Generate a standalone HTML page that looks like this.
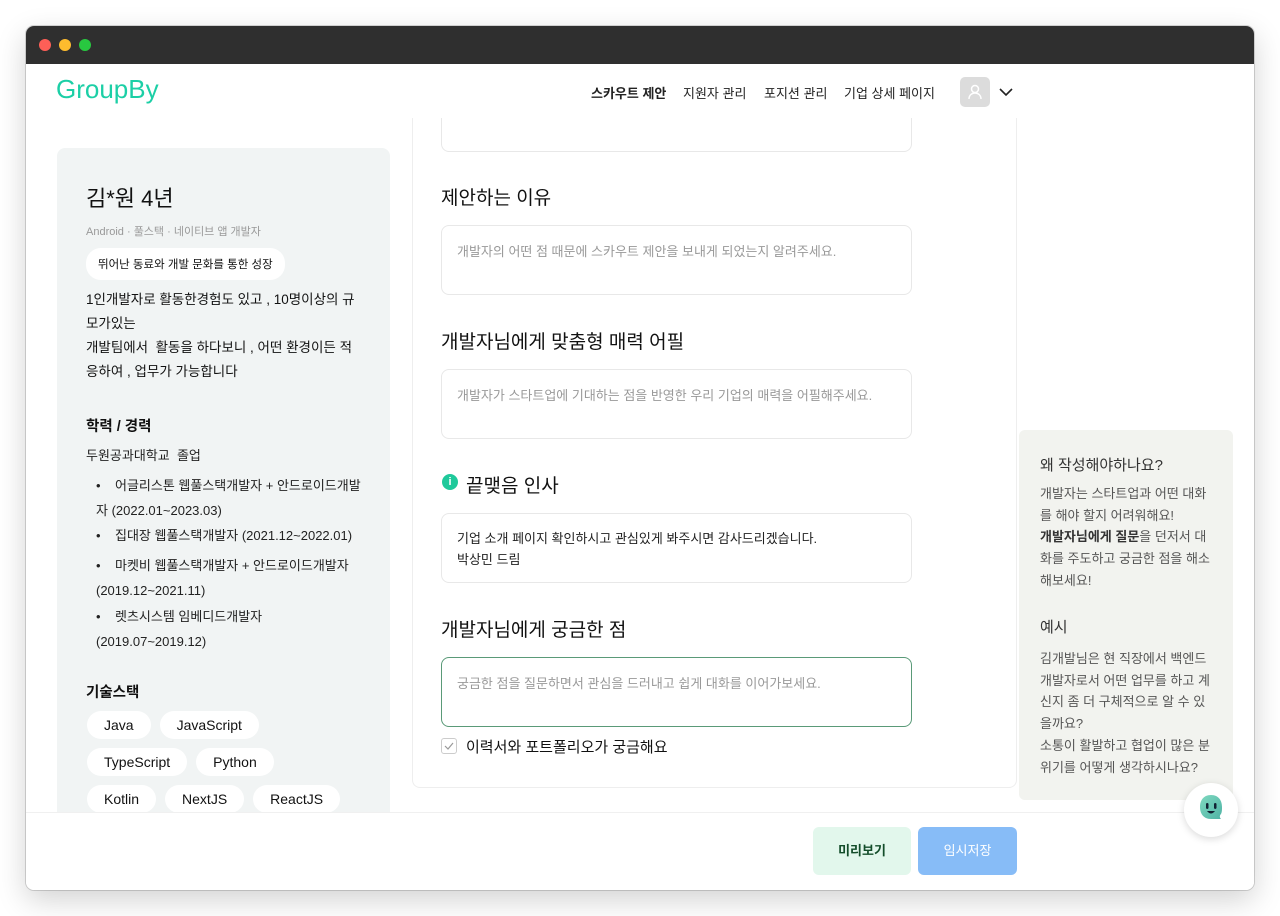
<!DOCTYPE html>
<html><head><meta charset="utf-8"><style>
*{margin:0;padding:0;box-sizing:border-box}
body{width:1280px;height:916px;background:#fff;font-family:"Liberation Sans","Noto Sans CJK KR",sans-serif;color:#111;position:relative;overflow:hidden}
.a{position:absolute}
.win{left:26px;top:26px;width:1228px;height:864px;background:#fff;border-radius:8px;overflow:hidden;box-shadow:0 10px 30px rgba(0,0,0,.18),0 0 0 1px rgba(0,0,0,.15)}
.tb{left:0;top:0;width:1228px;height:38px;background:#2f2f2f}
.dot{top:13px;width:12px;height:12px;border-radius:50%}
.nav{font-size:13px;color:#222;top:57px}
.box{border:1px solid #e8e8e8;border-radius:8px;background:#fff}
.h{font-size:19px;color:#111}
.ph{font-size:13px;color:#999}
.chip{display:inline-block;background:#fff;border-radius:16px;font-size:14px;padding:6px 17px;margin:0 5px 9px 0}
.lt{font-size:13px;color:#222;line-height:24px}
.rp{font-size:13px;color:#555;line-height:21.7px}
</style></head><body>
<div class="a win">
<div class="a tb"></div>
<div class="a dot" style="left:13px;background:#fe5f57"></div>
<div class="a dot" style="left:33px;background:#febc2e"></div>
<div class="a dot" style="left:53px;background:#28c840"></div>

<!-- left card -->
<div class="a" style="left:31px;top:122px;width:333px;height:720px;background:#f1f4f4;border-radius:8px"></div>
<div class="a" style="left:60px;top:155px;font-size:22px">김*원 4년</div>
<div class="a" style="left:60px;top:197px;font-size:11px;color:#999">Android · 풀스택 · 네이티브 앱 개발자</div>
<div class="a" style="left:60px;top:222px;background:#fff;border-radius:15px;font-size:11.5px;padding:8px 12px">뛰어난 동료와 개발 문화를 통한 성장</div>
<div class="a" style="left:60px;top:262px;font-size:13.5px;line-height:24px;width:275px">1인개발자로 활동한경험도 있고 , 10명이상의 규모가있는<br>개발팀에서&nbsp; 활동을 하다보니 , 어떤 환경이든 적응하여 , 업무가 가능합니다</div>
<div class="a" style="left:60px;top:389px;font-size:14.5px;font-weight:bold">학력 / 경력</div>
<div class="a lt" style="left:60px;top:418px">두원공과대학교&nbsp; 졸업</div>
<div class="a lt" style="left:70px;top:447px;width:270px;line-height:25px">•&nbsp;&nbsp;&nbsp; 어글리스톤 웹풀스택개발자 + 안드로이드개발자 (2022.01~2023.03)</div>
<div class="a lt" style="left:70px;top:498px">•&nbsp;&nbsp;&nbsp; 집대장 웹풀스택개발자 (2021.12~2022.01)</div>
<div class="a lt" style="left:70px;top:527px;width:270px;line-height:25px">•&nbsp;&nbsp;&nbsp; 마켓비 웹풀스택개발자 + 안드로이드개발자 (2019.12~2021.11)</div>
<div class="a lt" style="left:70px;top:578px;width:270px;line-height:25px">•&nbsp;&nbsp;&nbsp; 렛츠시스템 임베디드개발자 (2019.07~2019.12)</div>
<div class="a" style="left:60px;top:655px;font-size:14.5px;font-weight:bold">기술스택</div>
<div class="a" style="left:61px;top:685px;width:300px">
<span class="chip">Java</span><span class="chip" style="margin-left:4px">JavaScript</span><br>
<span class="chip">TypeScript</span><span class="chip" style="margin-left:4px">Python</span><br>
<span class="chip">Kotlin</span><span class="chip" style="margin-left:4px">NextJS</span><span class="chip" style="margin-left:4px">ReactJS</span></div>

<!-- main panel -->
<div class="a" style="left:386px;top:92px;width:605px;height:670px;border:1px solid #eee;border-top:none;border-radius:0 0 8px 8px;background:#fff"></div>
<div class="a box" style="left:415px;top:92px;width:471px;height:34px;border-top:none;border-radius:0 0 8px 8px"></div>
<div class="a h" style="left:415px;top:157px">제안하는 이유</div>
<div class="a box" style="left:415px;top:199px;width:471px;height:70px"></div>
<div class="a ph" style="left:431px;top:215px">개발자의 어떤 점 때문에 스카우트 제안을 보내게 되었는지 알려주세요.</div>
<div class="a h" style="left:415px;top:301px">개발자님에게 맞춤형 매력 어필</div>
<div class="a box" style="left:415px;top:343px;width:471px;height:70px"></div>
<div class="a ph" style="left:431px;top:359px">개발자가 스타트업에 기대하는 점을 반영한 우리 기업의 매력을 어필해주세요.</div>
<div class="a" style="left:416px;top:448px;width:16px;height:16px;border-radius:50%;background:#1fc99b;color:#fff;font-size:11px;text-align:center;line-height:16px;font-weight:bold">i</div>
<div class="a h" style="left:440px;top:445px">끝맺음 인사</div>
<div class="a box" style="left:415px;top:487px;width:471px;height:70px"></div>
<div class="a" style="left:431px;top:502px;font-size:13px;line-height:21px;color:#222">기업 소개 페이지 확인하시고 관심있게 봐주시면 감사드리겠습니다.<br>박상민 드림</div>
<div class="a h" style="left:415px;top:589px">개발자님에게 궁금한 점</div>
<div class="a" style="left:415px;top:631px;width:471px;height:70px;border:1px solid #5a9a78;border-radius:8px"></div>
<div class="a ph" style="left:431px;top:647px">궁금한 점을 질문하면서 관심을 드러내고 쉽게 대화를 이어가보세요.</div>
<div class="a" style="left:415px;top:712px;width:16px;height:16px;border:1px solid #ccc;border-radius:3px">
<svg width="14" height="14"><path d="M3 7l3 3 5-6" fill="none" stroke="#999" stroke-width="1.2"/></svg></div>
<div class="a" style="left:440px;top:710px;font-size:15px">이력서와 포트폴리오가 궁금해요</div>

<!-- header -->
<div class="a" style="left:30px;top:48px;font-size:26px;color:#1ccfa6;letter-spacing:0px">GroupBy</div>
<div class="a nav" style="left:565px;font-weight:bold">스카우트 제안</div>
<div class="a nav" style="left:657px">지원자 관리</div>
<div class="a nav" style="left:738px">포지션 관리</div>
<div class="a nav" style="left:818px">기업 상세 페이지</div>
<div class="a" style="left:934px;top:51px;width:30px;height:30px;background:#dcdcdc;border-radius:5px">
<svg width="30" height="30"><circle cx="15" cy="12" r="3.5" fill="none" stroke="#fff" stroke-width="1.5"/><path d="M9 22c0-4 3-6 6-6s6 2 6 6" fill="none" stroke="#fff" stroke-width="1.5"/></svg></div>
<svg class="a" style="left:973px;top:61px" width="14" height="10"><path d="M1 2l6 6 6-6" fill="none" stroke="#222" stroke-width="1.6"/></svg>

<!-- right panel -->
<div class="a" style="left:993px;top:404px;width:214px;height:370px;background:#f2f3ef;border-radius:6px"></div>
<div class="a" style="left:1014px;top:428px;font-size:15px;color:#333">왜 작성해야하나요?</div>
<div class="a rp" style="left:1014px;top:457px;width:172px">개발자는 스타트업과 어떤 대화를 해야 할지 어려워해요!<br><b style="color:#333">개발자님에게 질문</b>을 던저서 대화를 주도하고 궁금한 점을 해소해보세요!</div>
<div class="a" style="left:1014px;top:590px;font-size:15px;color:#333">예시</div>
<div class="a rp" style="left:1014px;top:622px;width:172px">김개발님은 현 직장에서 백엔드 개발자로서 어떤 업무를 하고 계신지 좀 더 구체적으로 알 수 있을까요?<br>소통이 활발하고 협업이 많은 분위기를 어떻게 생각하시나요?</div>

<!-- footer -->
<div class="a" style="left:0;top:786px;width:1228px;height:78px;background:#fff;border-top:1px solid #f0f0f0"></div>
<div class="a" style="left:787px;top:801px;width:98px;height:48px;background:#e2f7ec;border-radius:6px;color:#134d2a;font-size:13px;font-weight:bold;text-align:center;line-height:48px">미리보기</div>
<div class="a" style="left:892px;top:801px;width:99px;height:48px;background:#87bcf7;border-radius:6px;color:#fff;font-size:13px;text-align:center;line-height:48px">임시저장</div>
<div class="a" style="left:1158px;top:757px;width:54px;height:54px;border-radius:50%;background:#fff;box-shadow:0 2px 8px rgba(0,0,0,.15)">
<svg width="54" height="54"><defs><linearGradient id="g" x1="0" y1="0" x2="1" y2="1"><stop offset="0" stop-color="#7fd9c0"/><stop offset="1" stop-color="#4fb3a5"/></linearGradient></defs><path d="M27 12c-8 0-11 6-11 12s3 12 11 12h10c-2-2-1-4 0-5 1-2 1-4 1-7 0-6-3-12-11-12z" fill="url(#g)"/><rect x="22" y="20" width="2.5" height="6" rx="1.2" fill="#123"/><rect x="30" y="20" width="2.5" height="6" rx="1.2" fill="#123"/><path d="M23 28q4 5 8 0z" fill="#123"/></svg></div>
</div>
</body></html>
